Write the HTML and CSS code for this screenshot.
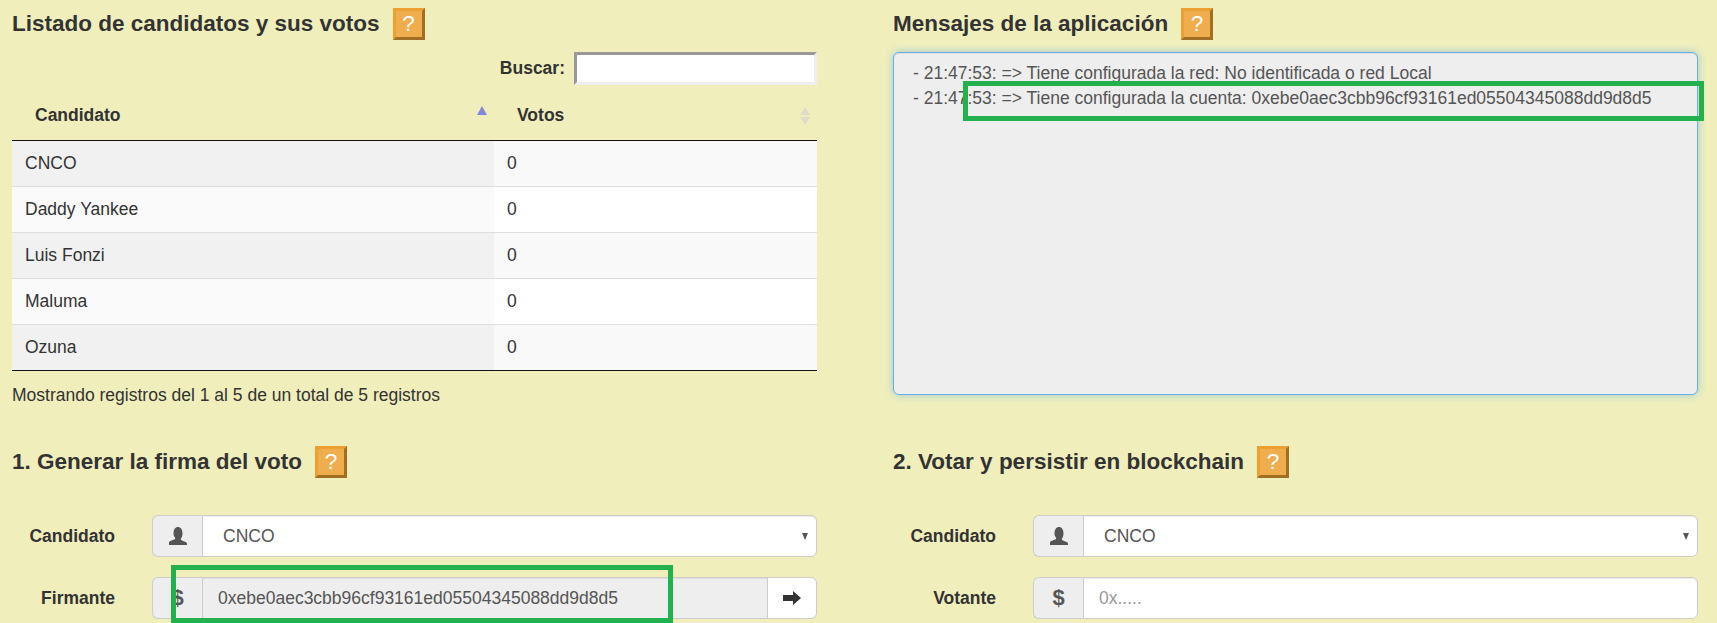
FILE: index.html
```html
<!DOCTYPE html>
<html lang="es">

<head>
  <meta charset="UTF-8">
  <meta name="viewport" content="width=device-width, initial-scale=1.0">
  <title>Votaciones</title>
  <link rel="stylesheet" href="styles.css">
</head>

<body>
  <main class="page">
    <section class="panel">
      <div class="title-row">
        <h3>Listado de candidatos y sus votos</h3>
        <button class="help" type="button">?</button>
      </div>
      <div class="search-row">
        <label for="buscar">Buscar:</label>
        <input type="search" id="buscar" class="search-input">
      </div>
      <table class="votes">
        <thead>
          <tr>
            <th class="col-name">
              <div class="th-inner">Candidato <span class="sort-asc"></span></div>
            </th>
            <th>
              <div class="th-inner">Votos <span class="sort-both"></span></div>
            </th>
          </tr>
        </thead>
        <tbody>
          <tr class="odd"><td>CNCO</td><td>0</td></tr>
          <tr class="even"><td>Daddy Yankee</td><td>0</td></tr>
          <tr class="odd"><td>Luis Fonzi</td><td>0</td></tr>
          <tr class="even"><td>Maluma</td><td>0</td></tr>
          <tr class="odd"><td>Ozuna</td><td>0</td></tr>
        </tbody>
      </table>
      <p class="table-info">Mostrando registros del 1 al 5 de un total de 5 registros</p>
    </section>

    <section class="panel">
      <div class="title-row">
        <h3>Mensajes de la aplicación</h3>
        <button class="help" type="button">?</button>
      </div>
      <div class="messages">
        <div>- 21:47:53: =&gt; Tiene configurada la red: No identificada o red Local</div>
        <div>- 21:47:53: =&gt; Tiene configurada la cuenta: 0xebe0aec3cbb96cf93161ed05504345088dd9d8d5</div>
      </div>
    </section>

    <section class="panel">
      <div class="title-row">
        <h3>1. Generar la firma del voto</h3>
        <button class="help" type="button">?</button>
      </div>
      <form class="vote-form">
        <div class="form-row">
          <label>Candidato</label>
          <div class="input-group">
            <span class="addon">
              <svg class="icon-user" viewBox="0 0 18 18"><path d="M0 18v-2.2c0-.8.5-1.3 1.4-1.7l3.600-1.500c.7-.3 1.200-.8 1.200-1.400 0-.5-.3-.8-.7-1.500C5 9.700 4.500 8.500 4.500 6.500 4.500 2.500 6.300 0 9 0s4.500 2.500 4.500 6.500c0 2-.5 3.200-1 4.200-.4.700-.7 1-.7 1.500 0 .6.500 1.100 1.200 1.400l3.600 1.500c.9.400 1.400.900 1.400 1.700V18z" /></svg>
            </span>
            <div class="select-wrap">
              <select class="field">
                <option>CNCO</option>
              </select>
            </div>
          </div>
        </div>
        <div class="form-row">
          <label>Firmante</label>
          <div class="input-group">
            <span class="addon addon-usd">$</span>
            <input class="field field-readonly" type="text" value="0xebe0aec3cbb96cf93161ed05504345088dd9d8d5" readonly>
            <button class="go" type="button">
              <svg class="icon-arrow" viewBox="0 0 18 14"><path d="M0 4h10V0l8 7-8 7v-4H0z" /></svg>
            </button>
          </div>
        </div>
      </form>
    </section>

    <section class="panel">
      <div class="title-row">
        <h3>2. Votar y persistir en blockchain</h3>
        <button class="help" type="button">?</button>
      </div>
      <form class="vote-form">
        <div class="form-row">
          <label>Candidato</label>
          <div class="input-group">
            <span class="addon">
              <svg class="icon-user" viewBox="0 0 18 18"><path d="M0 18v-2.2c0-.8.5-1.3 1.4-1.7l3.600-1.500c.7-.3 1.200-.8 1.200-1.400 0-.5-.3-.8-.7-1.500C5 9.700 4.500 8.500 4.500 6.500 4.500 2.500 6.300 0 9 0s4.500 2.500 4.500 6.500c0 2-.5 3.200-1 4.200-.4.700-.7 1-.7 1.500 0 .6.500 1.100 1.200 1.400l3.600 1.500c.9.400 1.400.900 1.400 1.700V18z" /></svg>
            </span>
            <div class="select-wrap">
              <select class="field">
                <option>CNCO</option>
              </select>
            </div>
          </div>
        </div>
        <div class="form-row">
          <label>Votante</label>
          <div class="input-group">
            <span class="addon addon-usd">$</span>
            <input class="field" type="text" placeholder="0x.....">
          </div>
        </div>
      </form>
    </section>

    <!-- recuadros verdes pintados encima de la captura -->
    <div class="mark mark-account"></div>
    <div class="mark mark-signer"></div>
  </main>
</body>

</html>
```

FILE: styles.css
```css
* {
  box-sizing: border-box;
}

html,
body {
  height: 100%;
  overflow: hidden;
}

body {
  margin: 0;
  background: #f0efbc;
  color: #333;
  font: normal 17.5px "Liberation Sans", Arial, sans-serif;
}

.page {
  position: relative;
  display: grid;
  grid-template-columns: 805px 805px;
  column-gap: 76px;
  row-gap: 32px;
  padding-left: 12px;
}

.title-row {
  display: flex;
  align-items: center;
  height: 32px;
  margin-top: 8px;
  gap: 13px;
}

h3 {
  margin: 0;
  font-size: 22.5px;
  font-weight: bold;
  line-height: 32px;
}

.help {
  width: 32px;
  height: 32px;
  padding: 0;
  border: 3px solid;
  border-color: #ec9f32 #a06f24 #a06f24 #ec9f32;
  background: #f0ad4e;
  color: #fff;
  font: normal 22.5px "Liberation Sans", Arial, sans-serif;
}

/* buscador */
.search-row {
  display: flex;
  justify-content: flex-end;
  align-items: center;
  gap: 9px;
  height: 33px;
  margin-top: 12px;
  font-weight: bold;
}

.search-input {
  width: 243px;
  height: 33px;
  border: 3px solid;
  border-color: #999 #eee #eee #999;
  background: #fff;
  outline: none;
}

/* tabla */
.votes {
  width: 100%;
  border-collapse: separate;
  border-spacing: 0;
  table-layout: fixed;
}

.votes th {
  height: 56px;
  padding: 6px 7px 0 23px;
  border-bottom: 1px solid #111;
  text-align: left;
}

.votes .col-name {
  width: 482px;
}

.th-inner {
  display: flex;
  justify-content: space-between;
  align-items: center;
}

.sort-asc {
  width: 0;
  height: 0;
  margin-top: -11px;
  border: 5px solid transparent;
  border-top: 0;
  border-bottom: 9px solid #8585e0;
}

.sort-both {
  position: relative;
  width: 10px;
  height: 18px;
}

.sort-both::before,
.sort-both::after {
  content: "";
  position: absolute;
  left: 0;
  border: 5px solid transparent;
}

.sort-both::before {
  top: 0;
  border-top: 0;
  border-bottom: 8px solid #dcdccb;
}

.sort-both::after {
  bottom: 0;
  border-bottom: 0;
  border-top: 8px solid #dcdccb;
}

.votes td {
  height: 46px;
  padding: 0 13px;
  border-bottom: 1px solid #ddd;
}

.votes tbody tr:last-child td {
  border-bottom-color: #111;
}

.odd td {
  background: #f9f9f9;
}

.odd td:first-child {
  background: #f1f1f1;
}

.even td {
  background: #fff;
}

.even td:first-child {
  background: #fafafa;
}

.table-info {
  margin: 13px 0 0;
  line-height: 22px;
}

/* mensajes */
.messages {
  height: 343px;
  margin-top: 12px;
  padding: 8px 19px;
  border: 1px solid #66afe9;
  border-radius: 6px;
  background: #eee;
  color: #555;
  line-height: 25px;
  box-shadow: inset 0 1px 1px rgba(0, 0, 0, 0.075), 0 0 8px rgba(102, 175, 233, 0.6);
}

/* formularios */
.vote-form {
  display: flex;
  flex-direction: column;
  gap: 20px;
  margin-top: 37px;
}

.form-row {
  display: flex;
  align-items: center;
  gap: 37px;
}

.form-row label {
  width: 103px;
  font-weight: bold;
  text-align: right;
}

.input-group {
  display: flex;
  flex: 1;
  height: 42px;
}

.addon {
  display: flex;
  justify-content: center;
  align-items: center;
  width: 50px;
  border: 1px solid #ccc;
  border-right: 0;
  border-radius: 6px 0 0 6px;
  background: #eee;
  color: #555;
}

.addon-usd {
  font-size: 22px;
  font-weight: bold;
}

.icon-user {
  width: 18px;
  height: 18px;
  fill: #555;
}

.select-wrap {
  position: relative;
  display: flex;
  flex: 1;
}

/* flecha del select */
.select-wrap::after {
  content: "";
  position: absolute;
  top: 18px;
  right: 9px;
  border: 3.5px solid transparent;
  border-bottom: 0;
  border-top: 7px solid #555;
}

.field {
  flex: 1;
  min-width: 0;
  height: 42px;
  padding: 0 15px;
  border: 1px solid #ccc;
  border-radius: 0 6px 6px 0;
  background: #fff;
  color: #555;
  font: normal 17.5px "Liberation Sans", Arial, sans-serif;
  box-shadow: inset 0 1px 1px rgba(0, 0, 0, 0.075);
  outline: none;
}

select.field {
  padding-left: 20px;
  appearance: none;
}

.field::placeholder {
  color: #999;
}

.field-readonly {
  border-radius: 0;
  background: #eee;
}

.go {
  display: flex;
  justify-content: center;
  align-items: center;
  width: 49px;
  padding: 0;
  border: 1px solid #ccc;
  border-left: 0;
  border-radius: 0 6px 6px 0;
  background: #fff;
}

.icon-arrow {
  width: 18px;
  height: 14px;
  fill: #333;
}

/* recuadros verdes */
.mark {
  position: absolute;
  border: 5px solid #22b14c;
}

.mark-account {
  left: 963px;
  top: 81px;
  width: 741px;
  height: 40px;
}

.mark-signer {
  left: 171px;
  top: 565px;
  width: 502px;
  height: 58px;
}
```
